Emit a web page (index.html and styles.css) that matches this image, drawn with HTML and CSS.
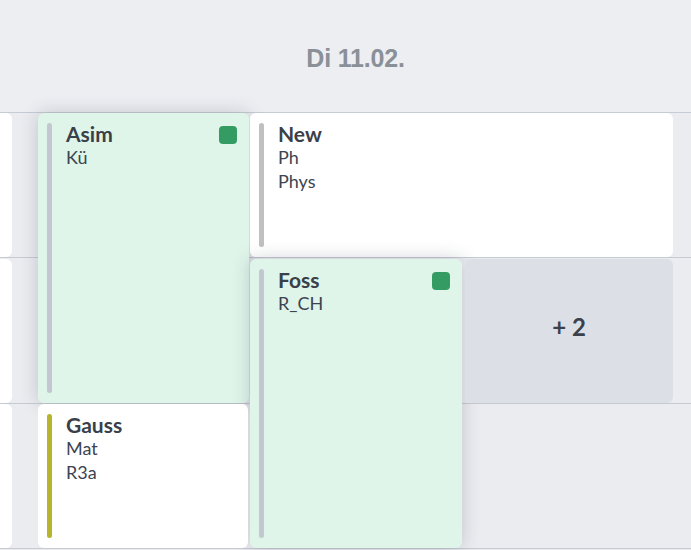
FILE: index.html
```html
<!DOCTYPE html>
<html lang="de">
<head>
<meta charset="utf-8">
<title>Di 11.02.</title>
<link rel="stylesheet" href="styles.css">
</head>
<body>
<div class="page">
  <header class="day-head">
    <div class="day-title">Di 11.02.</div>
  </header>
  <div class="grid">
    <div class="row-line r1"></div>
    <div class="row-line r2"></div>
    <div class="row-line r3"></div>

    <div class="card green asim">
      <div class="bar bar-grey"></div>
      <div class="content">
        <div class="title">Asim</div>
        <div class="sub">Kü</div>
      </div>
      <span class="badge"></span>
    </div>

    <div class="card white new">
      <div class="bar bar-silver"></div>
      <div class="content">
        <div class="title">New</div>
        <div class="sub">Ph</div>
        <div class="sub">Phys</div>
      </div>
    </div>

    <div class="card green foss">
      <div class="bar bar-grey"></div>
      <div class="content">
        <div class="title">Foss</div>
        <div class="sub">R_CH</div>
      </div>
      <span class="badge"></span>
    </div>

    <div class="card more">+ 2</div>

    <div class="card white gauss">
      <div class="bar bar-olive"></div>
      <div class="content">
        <div class="title">Gauss</div>
        <div class="sub">Mat</div>
        <div class="sub">R3a</div>
      </div>
    </div>

    <div class="prev p1"></div>
    <div class="prev p2"></div>
    <div class="prev p3"></div>
  </div>
</div>
</body>
</html>
```

FILE: styles.css
```css
html, body {
  margin: 0;
  padding: 0;
}

body {
  width: 691px;
  height: 550px;
  overflow: hidden;
  background: #ebecf0;
  font-family: Lato, "Open Sans", sans-serif;
  color: #3b414a;
}

.page {
  display: flex;
  flex-direction: column;
}

.day-head {
  height: 112px;
  border-bottom: 1px solid #c6ccd3;
  background: #edeef2;
  display: flex;
  align-items: center;
  justify-content: center;
  padding-left: 20px;
  box-sizing: content-box;
}

.day-title {
  font-family: "Liberation Sans", Arial, sans-serif;
  font-weight: bold;
  font-size: 25px;
  color: #8a9097;
  letter-spacing: -0.2px;
  margin-top: 4px;
}

.grid {
  display: grid;
  grid-template-columns: 12px 26px 212px 212px 211px 18px;
  grid-template-rows: 145px 146px 145px;
}

.row-line {
  grid-column: 1 / -1;
  align-self: end;
  height: 1px;
  background: #c6cbd2;
}
.r1 { grid-row: 1; }
.r2 { grid-row: 2; }
.r3 { grid-row: 3; }

.card {
  position: relative;
  border-radius: 6px;
  display: flex;
  padding: 10px 9px;
  box-sizing: border-box;
  margin-bottom: 1px;
}

.white {
  background: #ffffff;
}

.green {
  background: #dff5ea;
  box-shadow: 0 0 18px rgba(40, 50, 70, 0.22);
}

.asim {
  grid-column: 3;
  grid-row: 1 / 3;
  margin-right: 1px;
}

.new {
  grid-column: 4 / 6;
  grid-row: 1;
}

.foss {
  grid-column: 4;
  grid-row: 2 / 4;
  margin-top: 1px;
}

.more {
  grid-column: 5;
  grid-row: 2;
  margin: 1px 0 1px 3px;
  background: #dddfe7;
  align-items: center;
  justify-content: center;
  font-weight: bold;
  font-size: 24px;
  color: #3b414a;
  padding-bottom: 20px;
}

.gauss {
  grid-column: 3;
  grid-row: 3;
  margin-right: 2px;
}

.bar {
  width: 5px;
  flex: none;
  border-radius: 3px;
}
.bar-grey { background: #c3c8d0; }
.bar-silver { background: #c0c0c0; }
.bar-olive { background: #b6b52b; }

.content {
  margin-left: 14px;
  margin-top: -1px;
}

.title {
  font-weight: bold;
  font-size: 21px;
  line-height: 23px;
  color: #3a4049;
}

.sub {
  font-size: 18px;
  line-height: 24px;
  color: #3d4450;
}

.badge {
  position: absolute;
  top: 13px;
  right: 12px;
  width: 18px;
  height: 18px;
  border-radius: 4px;
  background: #349c63;
}

.prev {
  grid-column: 1;
  background: #ffffff;
  border-radius: 0 6px 6px 0;
  margin-bottom: 1px;
}
.p1 { grid-row: 1; }
.p2 { grid-row: 2; margin-top: 1px; }
.p3 { grid-row: 3; }
```
